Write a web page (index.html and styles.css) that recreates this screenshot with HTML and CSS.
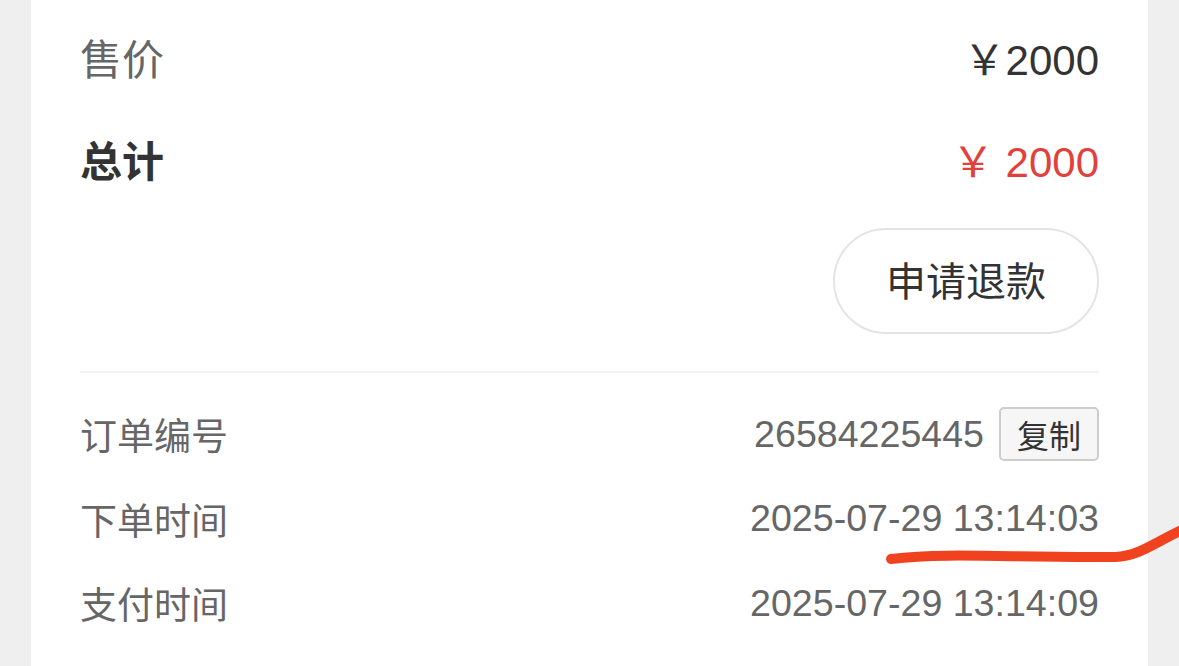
FILE: index.html
```html
<!DOCTYPE html>
<html lang="zh-CN">
<head>
    <meta charset="UTF-8">
    <meta name="viewport" content="width=device-width, initial-scale=1.0">
    <title>订单详情</title>
    <link rel="stylesheet" href="styles.css">
</head>
<body>
    <div class="page">
        <div class="card">
            <div class="price-row">
                <span class="label">售价</span>
                <span class="price">￥2000</span>
            </div>
            <div class="price-row">
                <span class="label total">总计</span>
                <span class="price red">￥ 2000</span>
            </div>
            <div class="actions">
                <button class="refund">申请退款</button>
            </div>
            <div class="divider"></div>
            <div class="info-row">
                <span class="info-label">订单编号</span>
                <span class="info-value">26584225445<button class="copy">复制</button></span>
            </div>
            <div class="info-row">
                <span class="info-label">下单时间</span>
                <span class="info-value">2025-07-29 13:14:03</span>
            </div>
            <div class="info-row">
                <span class="info-label">支付时间</span>
                <span class="info-value">2025-07-29 13:14:09</span>
            </div>
        </div>
    </div>

    <svg class="mark" width="1179" height="666" viewBox="0 0 1179 666">
        <path d="M891 559 C 950 552, 1010 558, 1115 557 C 1140 556, 1155 542, 1184 529" fill="none" stroke="#f0421e" stroke-width="10" stroke-linecap="round"/>
    </svg>
</body>
</html>
```

FILE: styles.css
```css
body {
    margin: 0;
    background: #efefef;
    font-family: "Liberation Sans", "Noto Sans CJK SC", sans-serif;
    color: #333;
}
.page {
    padding: 0 31px;
    height: 666px;
    overflow: hidden;
}
.card {
    background: white;
    padding: 5px 49px 40px;
    min-height: 700px;
}
.price-row {
    display: flex;
    justify-content: space-between;
    align-items: center;
    height: 102px;
}
.label {
    font-size: 42px;
    color: #666;
}
.label.total {
    color: #333;
    font-weight: bold;
}
.price {
    font-size: 42px;
    color: #333;
}
.price.red {
    color: #e2403a;
}
.actions {
    display: flex;
    justify-content: flex-end;
    margin-top: 19px;
}
.refund {
    width: 266px;
    height: 106px;
    border: 2px solid #e4e4e4;
    border-radius: 53px;
    background: white;
    font-family: inherit;
    font-size: 40px;
    color: #333;
    padding: 0 0 4px;
}
.divider {
    height: 2px;
    background: #f2f2f2;
    margin-top: 37px;
    margin-bottom: 19px;
}
.info-row {
    display: flex;
    justify-content: space-between;
    align-items: center;
    height: 84.5px;
}
.info-label {
    font-size: 37px;
    color: #666;
}
.info-value {
    display: flex;
    align-items: center;
    font-size: 37.6px;
    color: #666;
}
.copy {
    margin-left: 15px;
    width: 100px;
    height: 54px;
    border: 2px solid #cdcdcd;
    border-radius: 5px;
    background: #f6f6f6;
    font-family: inherit;
    font-size: 32px;
    color: #333;
    padding: 0;
}
.mark {
    position: absolute;
    top: 0;
    left: 0;
    pointer-events: none;
}
```
